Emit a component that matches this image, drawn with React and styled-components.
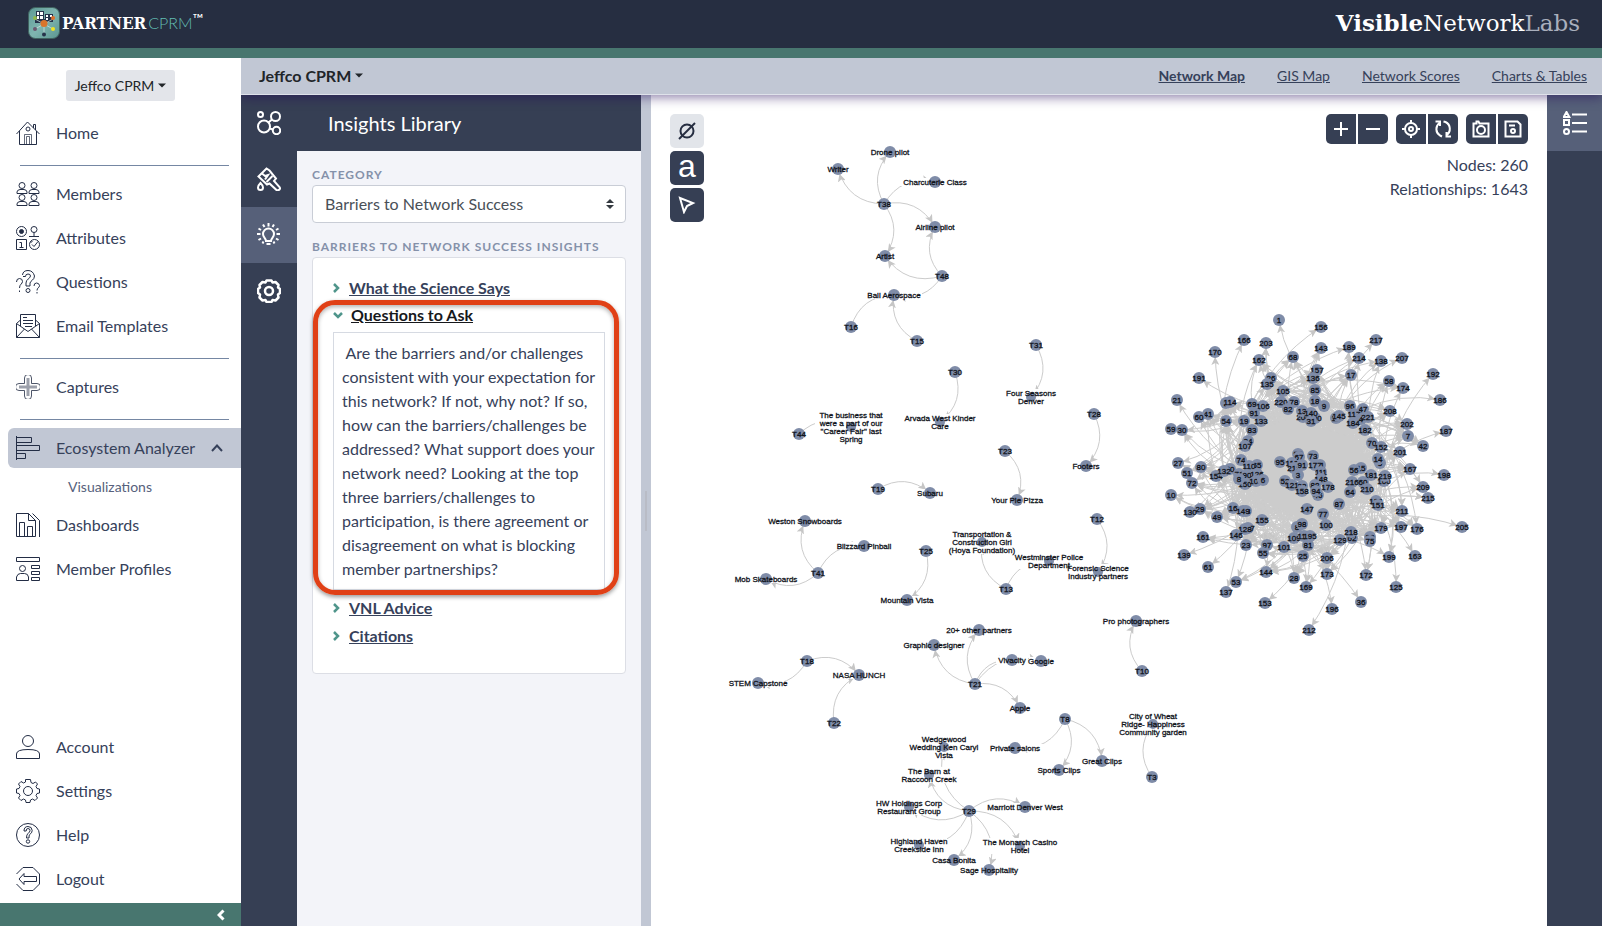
import React, { useState } from 'react';
import styled, { createGlobalStyle, css } from 'styled-components';

const color = {
  header: '#262e41',
  green: '#48766f',
  teal: '#4f958b',
  rail: '#363f54',
  railActive: '#566079',
  bar: '#c1c7d4',
  panel: '#f3f4f9',
  text: '#36415a',
  label: '#8591aa',
  rule: '#7587a3',
  node: '#7f8ca8',
  edge: '#cccccc',
};

const GlobalStyle = createGlobalStyle`
  *, *::before, *::after { box-sizing: border-box; }
  body { margin: 0; background: #fff; color: ${color.text}; font: 16px/24px Lato, sans-serif; }
  button, select { font: inherit; color: inherit; }
  button { border: 0; padding: 0; background: none; cursor: pointer; }
  a { color: inherit; text-decoration: none; }
  svg { display: block; flex: none; }
`;

/* ---------- page shell ---------- */

const Page = styled.div`
  display: flex;
  flex-direction: column;
  min-height: 100vh;
`;

const Header = styled.header`
  display: flex;
  align-items: center;
  justify-content: space-between;
  height: 58px;
  padding: 0 22px 2px 28px;
  background: ${color.header};
  border-bottom: 10px solid ${color.green};
  color: #fff;
`;

const Brand = styled.a`
  display: flex;
  align-items: center;
  gap: 2px;
`;

const BrandName = styled.span`
  font: 700 17px/24px 'DejaVu Serif Condensed', 'DejaVu Serif', serif;
`;

const BrandSuffix = styled.span`
  font-size: 16px;
  font-weight: 300;
  color: #62bdb2;
`;

const Trademark = styled.span`
  align-self: flex-start;
  margin-left: -2px;
  font-size: 14px;
`;

const Company = styled.div`
  font: 400 23px/32px 'DejaVu Serif', serif;
  white-space: nowrap;

  span { color: #a9afbd; }
`;

const Body = styled.div`
  display: flex;
  flex: 1;
`;

/* ---------- sidebar ---------- */

const Sidebar = styled.aside`
  display: flex;
  flex-direction: column;
  flex: none;
  width: 241px;
  padding-top: 12px;
`;

const NetworkButton = styled.button`
  display: flex;
  align-items: center;
  align-self: center;
  gap: 4px;
  height: 31px;
  margin-bottom: 12px;
  padding: 0 9px;
  border-radius: 3px;
  background: #e3e5ea;
  color: #212529;
  font-size: 14px;
`;

const Nav = styled.nav`
  display: flex;
  flex-direction: column;
  gap: 4px;
`;

const FootNav = styled(Nav)`
  margin-top: auto;
  padding-bottom: 4px;
`;

const NavLink = styled.a`
  display: flex;
  align-items: center;
  gap: 16px;
  height: 40px;
  margin-left: 8px;
  padding-left: 8px;
  border-radius: 6px 0 0 6px;
  background: ${(p) => (p.$active ? color.bar : 'transparent')};
`;

const SubLink = styled.a`
  padding-left: 68px;
  height: 29px;
  font-size: 14px;
  line-height: 29px;
  color: #56617c;
`;

const Rule = styled.hr`
  width: 209px;
  height: 1px;
  margin: 8px 0 4px 20px;
  border: 0;
  background: ${color.rule};
`;

const Collapse = styled.button`
  display: flex;
  align-items: center;
  justify-content: flex-end;
  height: 23px;
  padding-right: 16px;
  background: ${color.green};
`;

/* ---------- workspace ---------- */

const Workspace = styled.main`
  display: flex;
  flex-direction: column;
  flex: 1;
  min-width: 0;
`;

const TopBar = styled.div`
  position: relative;
  z-index: 2;
  display: flex;
  align-items: center;
  justify-content: space-between;
  height: 37px;
  padding: 0 15px 0 18px;
  background: ${color.bar};
  border-bottom: 1px solid #dfe2ea;
  box-shadow: 0 2px 12px rgba(34, 10, 90, 0.55);
  clip-path: inset(0 0 -24px 0);
`;

const MapButton = styled.button`
  display: flex;
  align-items: center;
  gap: 4px;
  color: #212529;
  font-weight: 700;
`;

const Tabs = styled.nav`
  display: flex;
  gap: 32px;
`;

const Tab = styled.a`
  font-size: 14px;
  font-weight: ${(p) => (p.$active ? 700 : 400)};
  text-decoration: underline;
`;

const Panes = styled.div`
  display: flex;
  flex: 1;
`;

const Rail = styled.div`
  flex: none;
  width: ${(p) => (p.$slim ? 55 : 56)}px;
  background: ${color.rail};
`;

const RailButton = styled.button`
  display: flex;
  align-items: center;
  justify-content: center;
  width: 100%;
  height: 56px;
  color: #fff;
  background: ${(p) => (p.$active ? color.railActive : 'transparent')};
`;

const Library = styled.section`
  flex: none;
  width: 344px;
  background: ${color.panel};
`;

const LibraryTitle = styled.h1`
  height: 56px;
  margin: 0;
  padding-left: 31px;
  background: ${color.rail};
  color: #fff;
  font-size: 20px;
  font-weight: 400;
  line-height: 56px;
`;

const LibraryBody = styled.div`
  padding: 16px 15px;
`;

const caption = css`
  display: block;
  margin: 0 0 2px;
  color: ${color.label};
  font-size: 12px;
  font-weight: 700;
  line-height: 16px;
  letter-spacing: 1px;
  text-transform: uppercase;
`;

const FieldLabel = styled.label`
  ${caption}
`;

const ListHeading = styled.h2`
  ${caption}
`;

const SelectBox = styled.div`
  position: relative;
  margin-bottom: 16px;

  svg {
    position: absolute;
    right: 12px;
    top: 14px;
    pointer-events: none;
  }
`;

const Select = styled.select`
  width: 100%;
  height: 38px;
  padding: 0 12px;
  border: 1px solid #c9cdd6;
  border-radius: 4px;
  background: #fff;
  color: #495057;
  appearance: none;
`;

const Card = styled.div`
  padding: 16px 20px 23px;
  border: 1px solid #dcdee5;
  border-radius: 4px;
  background: #fff;
`;

const Insight = styled.div`
  position: relative;
  margin-bottom: ${(p) => (p.$open ? 4 : 0)}px;
`;

const InsightToggle = styled.button`
  display: flex;
  align-items: center;
  gap: ${(p) => (p.$open ? 8 : 9)}px;
  height: ${(p) => (p.$open ? 26 : 28)}px;
  color: ${(p) => (p.$open ? '#16181c' : color.text)};
  font-weight: 700;
  text-decoration: underline;
`;

const InsightText = styled.p`
  margin: 4px 0 0;
  padding: 8px;
  border: 1px solid #d6dae2;
  white-space: pre-wrap;
`;

const Highlight = styled.div`
  position: absolute;
  inset: -2px -14px -5px -20px;
  border: 5px solid #e04016;
  border-radius: 22px;
  box-shadow: 0 2px 4px rgba(0, 0, 0, 0.4), inset 0 2px 4px rgba(0, 0, 0, 0.3);
  pointer-events: none;
`;

const Splitter = styled.div`
  display: flex;
  align-items: center;
  justify-content: center;
  flex: none;
  width: 10px;
  background: ${color.bar};

  &::after {
    content: '';
    width: 2px;
    height: 40px;
    background: #b9bcc6;
  }
`;

/* ---------- map ---------- */

const MapPane = styled.section`
  position: relative;
  display: flex;
  justify-content: space-between;
  align-items: flex-start;
  flex: 1;
  min-width: 0;
  padding: 19px;
  overflow: hidden;
`;

const Graph = styled.svg`
  position: absolute;
  inset: 0;
  width: 100%;
  height: 100%;

  text {
    font: 8px/8px 'Liberation Sans', Arial, sans-serif;
    text-anchor: middle;
    fill: #10131a;
    stroke: #10131a;
    stroke-width: 0.3;
  }
`;

const ModeTools = styled.div`
  position: relative;
  display: flex;
  flex-direction: column;
  gap: 3px;
`;

const ModeButton = styled.button`
  display: flex;
  align-items: center;
  justify-content: center;
  width: 34px;
  height: 34px;
  border-radius: 5px;
  background: ${(p) => (p.$off ? '#e2e5ea' : color.rail)};
  color: ${(p) => (p.$off ? '#262e41' : '#fff')};
`;

const Letter = styled.span`
  font: 32px/28px 'Liberation Sans Narrow', 'Liberation Sans', sans-serif;
  padding-bottom: 4px;
`;

const MapInfo = styled.div`
  position: relative;
  text-align: right;
`;

const ViewTools = styled.div`
  display: flex;
  justify-content: flex-end;
  gap: 8px;
  margin-bottom: 9px;
`;

const ToolPair = styled.div`
  display: flex;
  gap: 2px;
  overflow: hidden;
  border-radius: 5px;
`;

const ToolButton = styled.button`
  display: flex;
  align-items: center;
  justify-content: center;
  width: 30px;
  height: 30px;
  background: ${color.rail};
  color: #fff;
`;

/* ---------- icons ---------- */

const Icon = ({ size = 24, width = 1, children, ...rest }) => (
  <svg width={size} height={size} viewBox={`0 0 ${size} ${size}`} fill="none" stroke="currentColor"
    strokeWidth={width} aria-hidden="true" {...rest}>
    {children}
  </svg>
);

const person = (x, y) => (
  <g key={`${x}-${y}`} transform={`translate(${x} ${y})`}>
    <circle cx="5.5" cy="3.5" r="3" />
    <path d="M.5 11.5V10q0-2 3-2.5h4q3 .5 3 2.5v1.5z" />
  </g>
);

const QUESTION = 'M-4-4.5Q-4-9 0-9t4.2 4Q4.2-2.500 1.500-.8 1 0 1 2.500H-1.500Q-1.500-1 0-2 2-3.500 2-5 2-7 0-7T-1.800-4.500Z';

const navIcons = {
  home: (
    <>
      <path d="M.5 13 11.500 1l12 12M3.500 10v13.500h17V10M17.500 7V3.500h2V9" />
      <circle cx="12" cy="8" r="2" />
      <path d="M8.500 23V13.500h7V23M10.500 23v-7.500h3V23" strokeOpacity=".7" />
    </>
  ),
  members: <>{person(0.5, 0)}{person(12.5, 0)}{person(0.5, 12)}{person(12.5, 12)}</>,
  attributes: (
    <>
      <circle cx="5.500" cy="5.500" r="5" /><circle cx="5.500" cy="5.500" r="2" fill="currentColor" />
      <circle cx="18" cy="3.500" r="3" /><path d="M18 6.500v4M13 10.500h10" />
      <path d="M.5 13.500h10v10H.5zM3.500 16.500h2v5M3.500 21.500h4" />
      <circle cx="18.500" cy="18.500" r="5" /><path d="m16 18.500 2 2 4-5M14.500 17l2-2" />
    </>
  ),
  questions: (
    <>
      <path d="M6.500 5Q7 .5 12 .5t6.500 5.500c0 4-4 4.500-4.500 7v3h-4v-3c0-4 4-4 4.500-7q0-2-2.500-2T9.500 6.500H7" />
      <circle cx="12" cy="20.500" r="2" />
      <path d="M.5 12q0-3.500 3-3.500t3 3c0 2.500-3 2.500-3 6.500M18 16q0-3 2.500-3t3 2.500c0 2.500-2.500 2-2.500 5M3.500 20.500v1.500M21 22v1.500" />
    </>
  ),
  email: (
    <>
      <path d="M4.500 12V.5h15V12M.5 9.500v14h23v-14l-11.500 8zM.5 9.500 4.500 6M23.500 9.500 19.500 6M.5 23.500l8-8.500M23.500 23.500l-8-8.500" />
      <path d="M7 3.500h4M7 6.500h10M7 9.500h10M9 12.500h7" />
    </>
  ),
  captures: (
    <>
      <path d="M8.500 8.500V3a3 3 0 0 1 7 0v5.500H21a3 3 0 0 1 0 7h-5.500V21a3 3 0 0 1-7 0v-5.500H3a3 3 0 0 1 0-7z" strokeOpacity=".8" />
      <path d="M12 3v18M3 12h18" strokeWidth="3" strokeOpacity=".45" />
    </>
  ),
  analyzer: <path d="M.5 0v24M.5 1.500h15v5H.5M.5 9.500h23v5H.5M.5 17.500h9v5H.5" />,
  dashboards: (
    <path d="M12.500.5H.5v23h19V7.500zv7h7M16.500.5l7 7V24M3.500 23V9.500h5V23M11.500 23v-9.500h5V23" />
  ),
  profiles: (
    <>
      <path d="M.5.5h23v4H.5zM15.500 8.500h8v3h-8zM15.500 14.500h8v3h-8zM15.500 20.500h8v3h-8z" />
      <circle cx="6.500" cy="11.500" r="3" /><path d="M.5 23.500V20q1-3.500 4-3.500h4q3.500 0 4 3.500v3.500z" />
    </>
  ),
  account: (
    <><circle cx="12" cy="6" r="5.500" /><path d="M.5 23.500V19q0-4.500 11.500-4.500T23.500 19v4.500z" /></>
  ),
  settings: (
    <>
      <circle cx="12" cy="12" r="4.500" />
      <path d="M9.500.5h5l.5 3 2 1 2.500-1.500 2 2L20 7.500l1 2 2.500.5v4l-2.500.5-1 2 1.500 2.500-2.500 2.500-2.500-1.500-2 1-.5 2.500h-4l-.5-2.500-2-1L5 21.500 2.500 19 4 16.500l-1-2L.5 14v-4L3 9.500l1-2L2.500 5 5 2.500 7.500 4l2-1z" />
    </>
  ),
  help: (
    <>
      <circle cx="12" cy="12" r="11.500" />
      <path d={QUESTION} transform="translate(12 12.500)" /><circle cx="12" cy="18.500" r="1.700" />
    </>
  ),
  logout: (
    <path d="M.5 7 7 .5h10L23.500 7v10L17 23.500H7L.5 17M3 12l5-5.500v3h12.500v5H8v3z" />
  ),
};

const railIcons = {
  network: (
    <><circle cx="3.500" cy="3.500" r="2.500" /><circle cx="18.500" cy="5.500" r="4.500" /><circle cx="7" cy="15.500" r="6" /><circle cx="19.500" cy="19.500" r="3.700" /><path d="m11.500 11.500 3.500-3M12.500 17.500l3.500 1" /></>
  ),
  style: (
    <>
      <path d="M1.500 9.500 9.500 1.500l3 2 6.500 8-2 2.500 5.500 6q1 1.500 0 2.500t-3 .5l-7-6.500-2.500 1z" />
      <path d="m5 6.500 3 2.500 3-1-3 4.500M9.500 15l6-6" />
      <path d="M3.500 16q2.500 2.500 2.500 4.500a2.500 2.500 0 0 1-5 0Q1 18.500 3.500 16z" />
    </>
  ),
  insights: (
    <><path d="M9 18c0-3-3-3.500-3-7a5.500 5.500 0 0 1 11 0c0 3.500-3 4-3 7zM9.500 21h4" /><path d="M11.500 0v3.500M6 1.500 7.500 4M17 1.500 15.500 4M1.500 5.500 4 7M21.500 5.500 19 7M0 11h3.500M19.500 11H23M1.500 17 4 15.500M21.500 17 19 15.500M5.500 20.500l1-2M17.500 20.500l-1-2" /></>
  ),
  gear: (
    <g strokeWidth="2.500">
      <circle cx="12" cy="12" r="4" />
      <path d="M9.500 1.500h5l1 2 3-.5 3 3-.5 2.500 2 1.500v4l-2 1.500.5 3-3 3-3-.5-1 2h-5l-1-2-3 .5-3-3 .5-3-2-1.500v-4l2-1.500L2.500 6l3-3 3 .5z" strokeLinejoin="round" />
    </g>
  ),
  legend: (
    <><path d="M3.500 1 6.300 6H.7zM1 9h5v5H1zM9 3.500h15M9 12h15M9 20.500h15" /><circle cx="3.500" cy="20.500" r="2.500" /></>
  ),
};

const Chevron = ({ open }) => (
  <Icon size={open ? 10 : 7} width="2.500" color={color.teal} viewBox={open ? '0 0 10 10' : '0 0 7 12'}
    {...(open ? {} : { height: 12 })}>
    <path d={open ? 'm1 3 4 4 4-4' : 'm1 2 4 4-4 4'} />
  </Icon>
);

const Caret = () => (
  <svg width="8" height="8" viewBox="0 0 8 8" fill="currentColor" aria-hidden="true"><path d="M0 1.500h8L4 5.500z" /></svg>
);

const Logo = () => (
  <svg width="32" height="32" viewBox="0 0 32 32" aria-hidden="true">
    <defs>
      <linearGradient id="tile" x1="0" y1="0" x2="1" y2="1">
        <stop offset="0" stopColor="#5d9a95" /><stop offset=".5" stopColor="#7fb5b0" /><stop offset="1" stopColor="#5b9690" />
      </linearGradient>
    </defs>
    <rect x=".5" y=".5" width="31" height="31" rx="7" fill="url(#tile)" stroke="#40635f" />
    <path d="M8 4h8v11H8zM17 7h8v8h-8zM7 12h10v4H7z" fill="#26334a" />
    <path d="M9 5h2v3H9zM12 5h3v3h-3zM9 9h2v3H9zM12 9h3v3h-3zM18 8h2v2h-2zM22 8h2v2h-2zM18 11h2v2h-2z" fill="#fff" />
    <path d="m16 17-9-5M16 17l9-5M16 17l-9 5M16 17l9 5M16 17v10" stroke="#d5e5e3" strokeWidth=".7" />
    <circle cx="16" cy="16.500" r="3.500" fill="#d9752c" /><circle cx="25" cy="11" r="2" fill="#e0702a" />
    <circle cx="7" cy="11" r="2" fill="#8eb94b" /><circle cx="7" cy="22" r="2" fill="#6b5870" />
    <circle cx="25" cy="22" r="2" fill="#f1e322" /><circle cx="16" cy="27.500" r="2" fill="#26334a" />
  </svg>
);

const toolIcons = {
  zoomIn: <path d="M9 2v14M2 9h14" />,
  zoomOut: <path d="M2 9h14" />,
  center: <><circle cx="9" cy="9" r="6" /><circle cx="9" cy="9" r="2" /><path d="M9 0v3M9 15v3M0 9h3M15 9h3" /></>,
  refresh: <><path d="M5.500 3a7.500 7.500 0 0 0 .5 12.500l2 1M1.500 1.500H6V6" /><path d="M9.500 1.500l2 .5a7.500 7.500 0 0 1 1 13M17 16.500h-4.500V12" /></>,
  camera: <><path d="M1.500 3.500h3v-2h2l1 2h9v13h-15z" /><circle cx="9" cy="10" r="4" /></>,
  save: <><path d="M1.500 1.500h12l3 3v12h-15zM5 5.500h6" /><circle cx="9" cy="11" r="2" /></>,
};

/* ---------- graph data ---------- */

const partners = [
  [890, 152, 'Drone pilot'], [838, 169, 'Writer'], [935, 182, 'Charcuterie Class'], [884, 204, 'T38'],
  [935, 227, 'Airline pilot'], [885, 256, 'Artist'], [942, 276, 'T48'], [894, 295, 'Ball Aerospace'],
  [851, 327, 'T16'], [917, 341, 'T15'], [1036, 345, 'T31'], [1031, 397, 'Four Seasons|Denver'],
  [955, 372, 'T30'], [940, 422, 'Arvada West Kinder|Care'],
  [851, 427, 'The business that|were a part of our|"Career Fair" last|Spring'], [799, 434, 'T44'],
  [1094, 414, 'T28'], [1086, 466, 'Footers'], [1005, 451, 'T23'], [1017, 500, 'Your Pie Pizza'],
  [878, 489, 'T19'], [930, 493, 'Subaru'], [805, 521, 'Weston Snowboards'], [864, 546, 'Blizzard Pinball'],
  [766, 579, 'Mob Skateboards'], [818, 573, 'T41'], [926, 551, 'T25'], [907, 600, 'Mountain Vista'],
  [982, 542, 'Transportation &|Construction Girl|(Hoya Foundation)'], [1006, 589, 'T13'],
  [1049, 561, 'Westminster Police|Department'], [1097, 519, 'T12'], [1098, 572, 'Forensic Science|Industry partners'],
  [807, 661, 'T18'], [758, 683, 'STEM Capstone'], [859, 675, 'NASA HUNCH'], [834, 723, 'T22'],
  [979, 630, '20+ other partners'], [934, 645, 'Graphic designer'], [1012, 660, 'Vivacity'], [1041, 661, 'Google'],
  [975, 684, 'T21'], [1020, 708, 'Apple'], [1136, 621, 'Pro photographers'], [1142, 671, 'T10'],
  [1065, 719, 'T8'], [1015, 748, 'Private salons'], [1059, 770, 'Sports Clips'], [1102, 761, 'Great Clips'],
  [1153, 724, 'City of Wheat|Ridge- Happiness|Community garden'], [1152, 777, 'T3'],
  [944, 747, 'Wedgewood|Wedding Ken Caryl|Vista'], [929, 775, 'The Barn at|Raccoon Creek'],
  [909, 807, 'HW Holdings Corp|Restaurant Group'], [969, 811, 'T29'], [1025, 807, 'Marriott Denver West'],
  [919, 845, 'Highland Haven|Creekside Inn'], [954, 860, 'Casa Bonita'], [989, 870, 'Sage Hospitality'],
  [1020, 846, 'The Monarch Casino|Hotel'],
].map(([x, y, name]) => ({ x, y, name, lines: name.split('|') }));

const links = {
  T38: ['Drone', 'Writer', 'Charcuterie', 'Airline', 'Artist'], T48: ['Airline', 'Artist', 'Ball'],
  T16: ['Ball'], T15: ['Ball'], T31: ['Four'], T30: ['Arvada'], T44: ['The business'], T28: ['Footers'],
  T23: ['Your'], T19: ['Subaru'], T41: ['Weston', 'Blizzard', 'Mob'], T25: ['Mountain'],
  T13: ['Transportation', 'Westminster'], T12: ['Forensic'], T18: ['STEM', 'NASA'], T22: ['NASA'],
  T21: ['20+', 'Graphic', 'Vivacity', 'Google', 'Apple'], T10: ['Pro'], T8: ['Private', 'Sports', 'Great'],
  T3: ['City'], T29: ['Wedgewood', 'The Barn', 'HW', 'Marriott', 'Highland', 'Casa', 'Sage', 'The Monarch'],
};

const members = `1:1279,320 156:1321,327 166:1244,340 203:1266,343 143:1321,348 189:1349,347 217:1376,340 170:1215,352
162:1259,360 68:1293,357 214:1359,358 138:1381,361 207:1402,358 157:1317,370 17:1351,375 192:1433,374 191:1199,378
26:1271,378 136:1313,378 135:1267,384 58:1389,381 174:1403,388 105:1283,391 85:1315,390 21:1177,400 2:1226,403
114:1230,402 220:1281,402 78:1294,402 18:1315,401 186:1440,400 69:1252,404 106:1263,406 82:1288,409 9:1324,406
96:1350,406 47:1363,409 91:1254,413 204:1303,417 200:1315,418 31:1311,421 13:1302,411 140:1311,413 208:1390,411
41:1208,414 60:1199,417 19:1244,421 133:1261,421 54:1226,421 12:1336,418 145:1339,416 117:1354,414 4:1361,419
184:1353,423 221:1368,417 182:1365,430 202:1407,424 187:1446,431 59:1171,429 30:1182,430 83:1252,430 7:1408,436
24:1248,441 107:1245,446 70:1372,443 152:1381,447 42:1423,446 201:1400,452 74:1241,460 95:1280,462 57:1298,454
67:1299,457 73:1313,456 5:1380,463 14:1378,459 27:1178,463 80:1201,467 51:1187,473 65:1257,465 110:1249,466
154:1216,476 50:1230,469 132:1224,471 112:1292,463 213:1294,468 91:1302,465 167:1410,469 198:1444,475 160:1384,481
219:1385,476 181:1371,475 15:1361,468 56:1354,470 76:1239,474 90:1247,475 126:1257,474 71:1320,465 177:1315,465
111:1321,472 3:1298,475 72:1192,483 10:1171,495 29:1200,509 130:1190,512 49:1217,517 16:1233,508 48:1246,511
149:1243,511 155:1262,520 127:1248,528 128:1245,529 146:1236,535 161:1203,537 139:1184,555 61:1208,567 23:1246,545
97:1267,545 55:1263,553 101:1284,547 53:1236,582 137:1226,592 144:1266,572 153:1265,603 28:1294,578 25:1303,556
81:1308,545 109:1294,538 119:1304,536 195:1310,536 8:1297,527 98:1302,524 100:1326,525 77:1323,514 147:1307,509
87:1339,504 206:1327,558 173:1327,574 169:1306,587 129:1340,540 62:1352,538 218:1351,532 22:1370,537 75:1370,541
172:1366,575 199:1389,557 36:1361,602 196:1332,609 212:1309,630 125:1396,587 163:1415,556 179:1381,528 197:1401,527
176:1417,529 205:1462,527 211:1402,511 215:1428,498 209:1423,487 123:1376,501 151:1378,505 60:1363,482 210:1367,489
64:1350,492 216:1352,482 148:1321,479 178:1328,487 88:1315,485 46:1318,495 94:1316,491 52:1285,481 32:1302,486
121:1292,485 158:1302,491 150:1245,484 8:1239,479 103:1256,481 6:1263,480`
  .split(/\s+/)
  .map((entry) => {
    const [name, at] = entry.split(':');
    const [x, y] = at.split(',').map(Number);
    return { name, x, y };
  });

const curve = (a, b, bend = 0.36) => {
  const dx = b.x - a.x;
  const dy = b.y - a.y;
  const cx = (a.x + b.x) / 2 + dy * bend;
  const cy = (a.y + b.y) / 2 - dx * bend;
  return `M${a.x} ${a.y}Q${cx.toFixed(1)} ${cy.toFixed(1)} ${b.x} ${b.y}`;
};

const partnerEdges = Object.entries(links).flatMap(([from, to]) => {
  const source = partners.find((p) => p.name === from);
  return to.map((start) => curve(source, partners.find((p) => p.name.startsWith(start))));
});

const makeRandom = (seed) => () => {
  seed = (seed * 1664525 + 1013904223) % 4294967296;
  return seed / 4294967296;
};

const buildMemberEdges = () => {
  const random = makeRandom(41);
  const hub = { x: 1306, y: 468 };
  const distance = (a, b) => Math.hypot(a.x - b.x, a.y - b.y);
  const inner = members.filter((m) => distance(m, hub) < 84);
  const outer = members.filter((m) => distance(m, hub) >= 84);
  const pick = (list) => list[Math.floor(random() * list.length)];
  const dense = [];
  for (let i = 0; i < 1200; i += 1) dense.push(curve(pick(inner), pick(inner), 0.18));
  const reach = outer.flatMap((target) => {
    const away = distance(target, hub);
    const near = [...inner].sort((a, b) => distance(a, target) - distance(b, target)).slice(0, 40);
    const count = away > 138 ? 1 : away > 118 ? 3 : away > 100 ? 6 : 10;
    return Array.from({ length: count }, () => curve(pick(near), target, 0.16));
  });
  return { dense: dense.join(''), reach };
};

const memberEdges = buildMemberEdges();

const labelTop = (p) => p.y - p.lines.length * 4;

const NetworkGraph = () => (
  <Graph role="img" aria-label="Network map">
    <defs>
      <marker id="arrow" viewBox="0 0 8 8" refX="13" refY="4" markerWidth="8" markerHeight="8"
        markerUnits="userSpaceOnUse" orient="auto">
        <path d="M0 0 8 4 0 8 2 4z" fill="#c6c6c6" />
      </marker>
    </defs>
    <g transform="translate(-651 -95)">
      <g fill="none" stroke={color.edge}>
        {partnerEdges.map((d) => <path key={d} d={d} markerEnd="url(#arrow)" />)}
        {memberEdges.reach.map((d, i) => <path key={i} d={d} markerEnd="url(#arrow)" />)}
      </g>
      <path d={memberEdges.dense} fill="none" stroke={color.edge} />
      <path d="M1262 430 1290 418 1320 428 1348 436 1362 454 1358 478 1344 500 1330 514 1300 518 1272 506 1256 492 1260 450z"
        fill={color.edge} />
      {partners.filter((p) => p.name.length > 3).map((p) => {
        const width = Math.max(...p.lines.map((l) => l.length)) * 4;
        return (
          <rect key={p.name} x={p.x - width / 2} y={labelTop(p)} width={width} height={p.lines.length * 8} fill="#fff" />
        );
      })}
      {partners.map((p) => (
        <g key={p.name}>
          <circle cx={p.x} cy={p.y} r={p.lines.length > 1 ? 5 : 6} fill={color.node} />
          {p.lines.map((line, i) => (
            <text key={line} x={p.x} y={labelTop(p) + 7 + i * 8}>{line}</text>
          ))}
        </g>
      ))}
      {members.map(({ name, x, y }, i) => (
        <g key={i}>
          <circle cx={x} cy={y} r="6" fill={color.node} />
          <text x={x} y={y + 3}>{name}</text>
        </g>
      ))}
    </g>
  </Graph>
);

/* ---------- content ---------- */

const Item = ({ icon, children, active, extra }) => (
  <NavLink href="#" $active={active}>
    <Icon color="#232d45">{navIcons[icon]}</Icon>
    <span>{children}</span>
    {extra}
  </NavLink>
);

const insights = [
  { title: 'What the Science Says', text: '' },
  {
    title: 'Questions to Ask',
    marked: true,
    text: '\u00a0Are the barriers and/or challenges consistent with your expectation for this network? If not, why not? If so, how can the barriers/challenges be addressed? What support does your network need? Looking at the top three barriers/challenges to participation, is there agreement or disagreement on what is blocking member partnerships?',
  },
  { title: 'VNL Advice', text: '' },
  { title: 'Citations', text: '' },
];

const InsightList = () => {
  const [open, setOpen] = useState('Questions to Ask');
  return (
    <Card>
      {insights.map(({ title, text, marked }) => {
        const isOpen = open === title;
        return (
          <Insight key={title} $open={isOpen}>
            <InsightToggle type="button" $open={isOpen} aria-expanded={isOpen}
              onClick={() => setOpen(isOpen ? '' : title)}>
              <Chevron open={isOpen} />
              {title}
            </InsightToggle>
            {isOpen && text && <InsightText>{text}</InsightText>}
            {isOpen && marked && <Highlight />}
          </Insight>
        );
      })}
    </Card>
  );
};

const Tool = ({ icon, label }) => (
  <ToolButton type="button" aria-label={label}>
    <Icon size={18} width="2">{toolIcons[icon]}</Icon>
  </ToolButton>
);

export default function App() {
  return (
    <>
      <GlobalStyle />
      <Page>
        <Header>
          <Brand href="#">
            <Logo />
            <BrandName>PARTNER</BrandName>
            <BrandSuffix>CPRM</BrandSuffix>
            <Trademark>™</Trademark>
          </Brand>
          <Company><b>Visible</b>Network<span>Labs</span></Company>
        </Header>
        <Body>
          <Sidebar>
            <NetworkButton type="button">Jeffco CPRM <Caret /></NetworkButton>
            <Nav aria-label="Main">
              <Item icon="home">Home</Item>
              <Rule />
              <Item icon="members">Members</Item>
              <Item icon="attributes">Attributes</Item>
              <Item icon="questions">Questions</Item>
              <Item icon="email">Email Templates</Item>
              <Rule />
              <Item icon="captures">Captures</Item>
              <Rule />
              <Item icon="analyzer" active extra={
                <Icon size={12} width="2"><path d="m1 9 5-5.500L11 9" /></Icon>
              }>Ecosystem Analyzer</Item>
              <SubLink href="#">Visualizations</SubLink>
              <Item icon="dashboards">Dashboards</Item>
              <Item icon="profiles">Member Profiles</Item>
            </Nav>
            <FootNav aria-label="Account">
              <Item icon="account">Account</Item>
              <Item icon="settings">Settings</Item>
              <Item icon="help">Help</Item>
              <Item icon="logout">Logout</Item>
            </FootNav>
            <Collapse type="button" aria-label="Collapse sidebar">
              <Icon size={8} width="3" height="12" viewBox="0 0 8 12" color="#fff"><path d="M6.500 1.500 2 6l4.500 4.500" /></Icon>
            </Collapse>
          </Sidebar>
          <Workspace>
            <TopBar>
              <MapButton type="button">Jeffco CPRM <Caret /></MapButton>
              <Tabs aria-label="Views">
                <Tab href="#" $active>Network Map</Tab>
                <Tab href="#">GIS Map</Tab>
                <Tab href="#">Network Scores</Tab>
                <Tab href="#">Charts &amp; Tables</Tab>
              </Tabs>
            </TopBar>
            <Panes>
              <Rail>
                <RailButton type="button" aria-label="Network"><Icon width="2">{railIcons.network}</Icon></RailButton>
                <RailButton type="button" aria-label="Style"><Icon width="2">{railIcons.style}</Icon></RailButton>
                <RailButton type="button" aria-label="Insights" $active><Icon width="2">{railIcons.insights}</Icon></RailButton>
                <RailButton type="button" aria-label="Options"><Icon width="2">{railIcons.gear}</Icon></RailButton>
              </Rail>
              <Library>
                <LibraryTitle>Insights Library</LibraryTitle>
                <LibraryBody>
                  <FieldLabel htmlFor="category">Category</FieldLabel>
                  <SelectBox>
                    <Select id="category" defaultValue="barriers">
                      <option value="barriers">Barriers to Network Success</option>
                    </Select>
                    <svg width="8" height="10" viewBox="0 0 8 10" fill="#343a40" aria-hidden="true">
                      <path d="M4 0 8 4H0zM4 10 0 6h8z" />
                    </svg>
                  </SelectBox>
                  <ListHeading>Barriers to Network Success Insights</ListHeading>
                  <InsightList />
                </LibraryBody>
              </Library>
              <Splitter />
              <MapPane>
                <NetworkGraph />
                <ModeTools>
                  <ModeButton type="button" aria-label="Hide isolates" $off>
                    <Icon size={18} width="2"><circle cx="9" cy="9" r="6.500" /><path d="M1 17 17 1" /></Icon>
                  </ModeButton>
                  <ModeButton type="button"><Letter>a</Letter></ModeButton>
                  <ModeButton type="button" aria-label="Select">
                    <Icon size={18} width="2"><path d="m2 2 13 5-6 3-3 6z" /></Icon>
                  </ModeButton>
                </ModeTools>
                <MapInfo>
                  <ViewTools>
                    <ToolPair><Tool icon="zoomIn" label="Zoom in" /><Tool icon="zoomOut" label="Zoom out" /></ToolPair>
                    <ToolPair><Tool icon="center" label="Center" /><Tool icon="refresh" label="Refresh" /></ToolPair>
                    <ToolPair><Tool icon="camera" label="Snapshot" /><Tool icon="save" label="Save" /></ToolPair>
                  </ViewTools>
                  <div>Nodes: 260</div>
                  <div>Relationships: 1643</div>
                </MapInfo>
              </MapPane>
              <Rail $slim>
                <RailButton type="button" aria-label="Legend" $active><Icon width="2">{railIcons.legend}</Icon></RailButton>
              </Rail>
            </Panes>
          </Workspace>
        </Body>
      </Page>
    </>
  );
}
